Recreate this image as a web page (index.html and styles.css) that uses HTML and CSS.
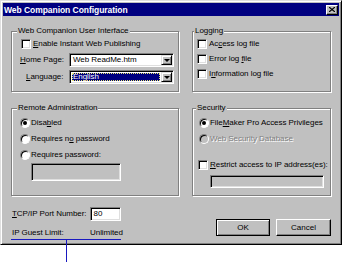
FILE: index.html
```html
<!DOCTYPE html>
<html lang="en">
<head>
    <meta charset="UTF-8">
    <title>Web Companion Configuration</title>
    <link rel="stylesheet" href="styles.css">
</head>
<body>
    <div class="window">
        <div class="titlebar">
            <span class="title">Web Companion Configuration</span>
            <span class="close">
                <svg width="6" height="5" viewBox="0 0 6 5"><path d="M0 0L6 5M6 0L0 5" stroke="#000" stroke-width="1.2"/></svg>
            </span>
        </div>
        <div class="content">
            <div class="groups">
                <fieldset class="group group-ui">
                    <legend>Web Companion User Interface</legend>
                    <label class="check first"><span class="box"></span><span><u>E</u>nable Instant Web Publishing</span></label>
                    <div class="field-row home">
                        <span class="lbl"><u>H</u>ome Page:</span>
                        <div class="combo"><span class="combo-text">Web ReadMe.htm</span><span class="drop"></span></div>
                    </div>
                    <div class="field-row lang">
                        <span class="lbl indent"><u>L</u>anguage:</span>
                        <div class="combo"><span class="combo-text"><span class="selected">English</span></span><span class="drop"></span></div>
                    </div>
                </fieldset>

                <fieldset class="group group-log">
                    <legend>Logging</legend>
                    <label class="check"><span class="box"></span><span>Ac<u>c</u>ess log file</span></label>
                    <label class="check"><span class="box"></span><span>Error log <u>f</u>ile</span></label>
                    <label class="check"><span class="box"></span><span>I<u>n</u>formation log file</span></label>
                </fieldset>

                <fieldset class="group group-remote">
                    <legend>Remote Administration</legend>
                    <label class="radio-row"><span class="radio on"></span><span>Disa<u>b</u>led</span></label>
                    <label class="radio-row"><span class="radio"></span><span>Requires n<u>o</u> password</span></label>
                    <label class="radio-row"><span class="radio"></span><span>Requires password:</span></label>
                    <div class="textbox disabled remote-pass"></div>
                </fieldset>

                <fieldset class="group group-sec">
                    <legend>Security</legend>
                    <label class="radio-row"><span class="radio on"></span><span>File<u>M</u>aker Pro Access Privileges</span></label>
                    <label class="radio-row off"><span class="radio"></span><span>Web Security Database</span></label>
                    <label class="check restrict"><span class="box"></span><span><u>R</u>estrict access to IP address(es):</span></label>
                    <div class="textbox disabled ip-list"></div>
                </fieldset>
            </div>

            <div class="footer">
                <div class="info">
                    <div class="port-row">
                        <span><u>T</u>CP/IP Port Number:</span>
                        <div class="textbox port">80</div>
                    </div>
                    <div class="guest-row">
                        <span>IP Guest Limit:</span>
                        <span>Unlimited</span>
                    </div>
                </div>
                <div class="buttons">
                    <button class="btn default">OK</button>
                    <button class="btn">Cancel</button>
                </div>
            </div>
        </div>
    </div>
    <div class="callout"></div>
</body>
</html>
```

FILE: styles.css
```css
body {
    margin: 0;
    background-color: #fff;
    font-family: "Liberation Sans", Arial, sans-serif;
    font-size: 8px;
    line-height: 10px;
    letter-spacing: -0.05px;
    color: #000;
}
u {
    text-decoration: underline;
    text-underline-offset: 1px;
}
.window {
    width: 342px;
    height: 245px;
    box-sizing: border-box;
    background-color: #c0c0c0;
    border: 1px solid;
    border-color: #dfdfdf #000 #000 #dfdfdf;
    box-shadow: inset 1px 1px #fff, inset -1px -1px #808080;
    padding: 2px;
}
.titlebar {
    height: 13px;
    display: flex;
    align-items: center;
    justify-content: space-between;
    background-color: #000080;
    color: #fff;
    padding: 0 1px;
}
.title {
    font-weight: bold;
    font-size: 8.5px;
}
.close {
    width: 12px;
    height: 10px;
    box-sizing: border-box;
    display: flex;
    align-items: center;
    justify-content: center;
    background-color: #c0c0c0;
    border: 1px solid;
    border-color: #fff #000 #000 #fff;
    box-shadow: inset -1px -1px #808080;
}
.content {
    padding: 10px 8px 0 8px;
}
.groups {
    display: grid;
    grid-template-columns: 168px 139px;
    grid-template-rows: 66px 93px;
    column-gap: 13px;
    row-gap: 11px;
}
.group {
    margin: 0;
    min-width: 0;
    box-sizing: border-box;
    border: 1px solid #808080;
    box-shadow: inset 1px 1px #fff, 1px 1px #fff;
    display: flex;
    flex-direction: column;
    align-items: flex-start;
}
.group legend {
    padding: 0 1px;
    margin-left: -3px;
    line-height: 10px;
    background-color: #c0c0c0;
}
.group-ui {
    padding: 3px 0 0 8px;
}
.group-log {
    padding: 3px 0 0 4px;
    gap: 5px;
}
.group-remote {
    padding: 5px 0 0 8px;
    gap: 6px;
}
.group-sec {
    padding: 5px 0 0 6px;
    gap: 6px;
}
.check, .radio-row {
    display: flex;
    align-items: center;
    gap: 2px;
    height: 10px;
}
.check.first {
    margin-left: 1px;
}
.box {
    width: 10px;
    height: 10px;
    box-sizing: border-box;
    background-color: #fff;
    border: 1px solid;
    border-color: #808080 #fff #fff #808080;
    box-shadow: inset 1px 1px #000, inset -1px -1px #dfdfdf;
}
.radio {
    width: 10px;
    height: 10px;
    box-sizing: border-box;
    border-radius: 50%;
    background-color: #fff;
    border: 1px solid;
    border-color: #808080 #fff #fff #808080;
    box-shadow: inset 1px 1px #000;
    display: flex;
    align-items: center;
    justify-content: center;
}
.radio.on::after {
    content: "";
    width: 4px;
    height: 4px;
    border-radius: 50%;
    background-color: #000;
}
.radio-row {
    gap: 1px;
}
.off {
    color: #808080;
    text-shadow: 1px 1px #fff;
}
.off .radio {
    background-color: #c0c0c0;
}
.field-row {
    display: grid;
    grid-template-columns: 49px 105px;
    align-items: center;
}
.field-row.home {
    margin-top: 4px;
}
.field-row.lang {
    margin-top: 3px;
}
.indent {
    padding-left: 6px;
}
.combo {
    height: 14px;
    box-sizing: border-box;
    display: flex;
    background-color: #fff;
    border: 1px solid;
    border-color: #808080 #fff #fff #808080;
    box-shadow: inset 1px 1px #000, inset -1px -1px #dfdfdf;
    padding: 1px;
}
.combo-text {
    flex: 1;
    display: flex;
    align-items: center;
    padding-left: 2px;
}
.lang .combo-text {
    padding: 1px;
}
.selected {
    flex: 1;
    align-self: stretch;
    display: flex;
    align-items: center;
    padding-left: 1px;
    background-color: #000080;
    color: #fff;
    outline: 1px dotted #e8e870;
    outline-offset: -1px;
}
.drop {
    width: 11px;
    box-sizing: border-box;
    display: flex;
    align-items: center;
    justify-content: center;
    background-color: #c0c0c0;
    border: 1px solid;
    border-color: #dfdfdf #000 #000 #dfdfdf;
    box-shadow: inset 1px 1px #fff, inset -1px -1px #808080;
}
.drop::after {
    content: "";
    border-left: 3px solid transparent;
    border-right: 3px solid transparent;
    border-top: 3px solid #000;
}
.textbox {
    box-sizing: border-box;
    background-color: #fff;
    border: 1px solid;
    border-color: #808080 #fff #fff #808080;
    box-shadow: inset 1px 1px #000, inset -1px -1px #dfdfdf;
}
.textbox.disabled {
    background-color: #c0c0c0;
}
.remote-pass {
    margin: -3px 0 0 11px;
    width: 90px;
    height: 18px;
}
.restrict {
    margin: 10px 0 0 -1px;
}
.ip-list {
    margin: -1px 0 0 11px;
    width: 114px;
    height: 13px;
}
.footer {
    display: flex;
    justify-content: space-between;
    margin-top: 11px;
}
.info {
    display: flex;
    flex-direction: column;
    gap: 7px;
}
.port-row {
    display: flex;
    align-items: center;
    gap: 3px;
    padding-left: 1px;
}
.port {
    width: 31px;
    height: 14px;
    padding: 1px 3px;
    line-height: 10px;
}
.guest-row {
    width: 109px;
    display: grid;
    grid-template-columns: 78px auto;
    padding: 0 0 1px 1px;
    border-bottom: 1px solid #1818c0;
}
.callout {
    width: 1px;
    height: 22px;
    margin-left: 66px;
    margin-top: -5px;
    background-color: #1818c0;
}
.buttons {
    display: flex;
    gap: 6px;
    margin-top: 12px;
    align-self: flex-start;
}
.btn {
    width: 55px;
    height: 17px;
    box-sizing: border-box;
    font-family: inherit;
    font-size: 8px;
    padding: 0;
    background-color: #c0c0c0;
    border: 1px solid;
    border-color: #fff #000 #000 #fff;
    box-shadow: inset -1px -1px #808080;
}
.btn.default {
    width: 54px;
    border-color: #000;
    box-shadow: inset 1px 1px #fff, inset -1px -1px #808080;
}
```
